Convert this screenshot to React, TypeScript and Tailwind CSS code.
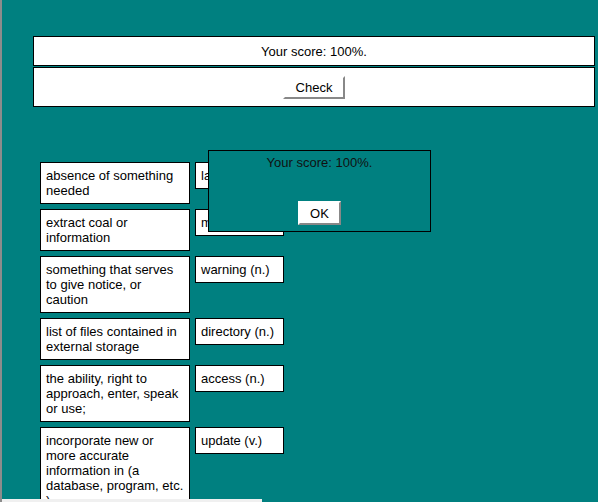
const rows: { def: string[]; word: string }[] = [
  { def: ['absence of something', 'needed'], word: 'lack (n.)' },
  { def: ['extract coal or', 'information'], word: 'mine (v.)' },
  { def: ['something that serves', 'to give notice, or', 'caution'], word: 'warning (n.)' },
  { def: ['list of files contained in', 'external storage'], word: 'directory (n.)' },
  { def: ['the ability, right to', 'approach, enter, speak', 'or use;'], word: 'access (n.)' },
  {
    def: ['incorporate new or', 'more accurate', 'information in (a', 'database, program, etc.', ')'],
    word: 'update (v.)',
  },
];

export default function App() {
  return (
    <div className="relative h-[502px] w-[598px] overflow-hidden border-l-2 border-[#8c8c8c] bg-[#008080] font-['Liberation_Sans',Arial,sans-serif] text-[13px] leading-[15px] text-black">
      <div className="pl-[31px] pt-[36px]">
        <div className="flex h-[30px] w-[562px] items-center justify-center border border-black bg-white">
          Your score: 100%.
        </div>
        <div className="mt-[1px] flex h-[40px] w-[562px] justify-center border border-black bg-white pt-[8px]">
          <button
            type="button"
            className="h-[23px] w-[62px] border-2 border-t-white border-l-white border-r-[#888] border-b-[#888] bg-white text-[13px] leading-[15px]"
          >
            Check
          </button>
        </div>
      </div>

      <div className="mt-[55px] flex flex-col gap-[5px] pl-[38px]">
        {rows.map((row) => (
          <div key={row.word} className="flex items-start gap-[5px]">
            <div className="w-[150px] border border-black bg-white p-[5px] whitespace-nowrap">
              {row.def.map((line) => (
                <div key={line}>{line}</div>
              ))}
            </div>
            <div className="w-[89px] border border-black bg-white p-[5px]">{row.word}</div>
          </div>
        ))}
      </div>

      <div className="absolute left-[206px] top-[150px] flex h-[82px] w-[223px] flex-col items-center border border-black bg-[#008080] pt-[4px] text-[#111]">
        <p>Your score: 100%.</p>
        <button
          type="button"
          className="mt-[31px] h-[24px] w-[43px] border-2 border-t-white border-l-white border-r-[#888] border-b-[#888] bg-white text-[13px] leading-[15px] text-black"
        >
          OK
        </button>
      </div>

      <div className="absolute bottom-0 left-[-2px] h-[3px] w-[262px] bg-[#f0f0f0]" />
    </div>
  );
}
